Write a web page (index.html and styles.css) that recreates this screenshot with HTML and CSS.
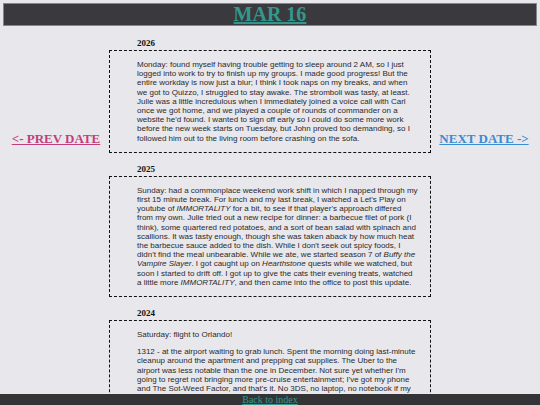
FILE: index.html
```html
<!DOCTYPE html>
<html lang="en">
<head>
    <meta charset="UTF-8">
    <meta name="viewport" content="width=device-width, initial-scale=1.0">
    <title>Mar 16</title>
    <link rel="stylesheet" href="styles.css">
</head>
<body>
    <header class="day-header">
        <h1><a href="#">MAR 16</a></h1>
    </header>

    <div class="layout">
        <nav class="side">
            <a class="prev" href="#">&lt;- PREV DATE</a>
        </nav>

        <main class="entries">
            <section class="entry">
                <h2>2026</h2>
                <div class="entry-body">
                    <p>Monday: found myself having trouble getting to sleep around 2 AM, so I just logged into work to try to finish up my groups. I made good progress! But the entire workday is now just a blur; I think I took naps on my breaks, and when we got to Quizzo, I struggled to stay awake. The stromboli was tasty, at least. Julie was a little incredulous when I immediately joined a voice call with Carl once we got home, and we played a couple of rounds of commander on a website he'd found. I wanted to sign off early so I could do some more work before the new week starts on Tuesday, but John proved too demanding, so I followed him out to the living room before crashing on the sofa.</p>
                </div>
            </section>

            <section class="entry">
                <h2>2025</h2>
                <div class="entry-body">
                    <p>Sunday: had a commonplace weekend work shift in which I napped through my first 15 minute break. For lunch and my last break, I watched a Let's Play on youtube of <i>IMMORTALITY</i> for a bit, to see if that player's approach differed from my own. Julie tried out a new recipe for dinner: a barbecue filet of pork (I think), some quartered red potatoes, and a sort of bean salad with spinach and scallions. It was tasty enough, though she was taken aback by how much heat the barbecue sauce added to the dish. While I don't seek out spicy foods, I didn't find the meal unbearable. While we ate, we started season 7 of <i>Buffy the Vampire Slayer</i>. I got caught up on <i>Hearthstone</i> quests while we watched, but soon I started to drift off. I got up to give the cats their evening treats, watched a little more <i>IMMORTALITY</i>, and then came into the office to post this update.</p>
                </div>
            </section>

            <section class="entry">
                <h2>2024</h2>
                <div class="entry-body">
                    <p>Saturday: flight to Orlando!</p>
                    <p>1312 - at the airport waiting to grab lunch. Spent the morning doing last-minute cleanup around the apartment and prepping cat supplies. The Uber to the airport was less notable than the one in December. Not sure yet whether I'm going to regret not bringing more pre-cruise entertainment; I've got my phone and The Sot-Weed Factor, and that's it. No 3DS, no laptop, no notebook if my phone dies.</p>
                </div>
            </section>
        </main>

        <nav class="side">
            <a class="next" href="#">NEXT DATE -&gt;</a>
        </nav>
    </div>

    <footer class="bottom-bar">
        <a href="#">Back to index</a>
    </footer>
</body>
</html>
```

FILE: styles.css
```css
body {
    margin: 3px;
    background-color: #e8e7ec;
    font-family: "Liberation Serif", "Times New Roman", serif;
}
.day-header {
    background-color: #3a3a3e;
    border: 1px solid #85858b;
    text-align: center;
}
.day-header h1 {
    margin: 0;
    font-size: 20px;
    line-height: 21px;
}
.day-header a {
    color: #34978c;
}
.layout {
    display: grid;
    grid-template-columns: 1fr 322px 1fr;
}
.side {
    padding-top: 105px;
    text-align: center;
    font-size: 13px;
    font-weight: bold;
}
.prev {
    color: #c43d7d;
}
.next {
    color: #3a8cd0;
}
.entries {
    display: flex;
    flex-direction: column;
    gap: 11px;
    padding-top: 12px;
    padding-bottom: 40px;
}
.entry h2 {
    margin: 0 0 2px;
    padding-left: 28px;
    font-size: 9px;
    line-height: 10px;
    color: #111;
}
.entry-body {
    border: 1px dashed #111;
    padding: 1px 12px 1px 27px;
    font-family: "Liberation Sans", Arial, sans-serif;
    font-size: 8px;
    line-height: 9.2px;
    color: #2a2a2a;
}
.entry-body p {
    margin: 8px 0;
}
.bottom-bar {
    position: fixed;
    left: 0;
    right: 0;
    bottom: 0;
    background-color: #343437;
    text-align: center;
    font-size: 10px;
    line-height: 11px;
}
.bottom-bar a {
    color: #34978c;
}
```
